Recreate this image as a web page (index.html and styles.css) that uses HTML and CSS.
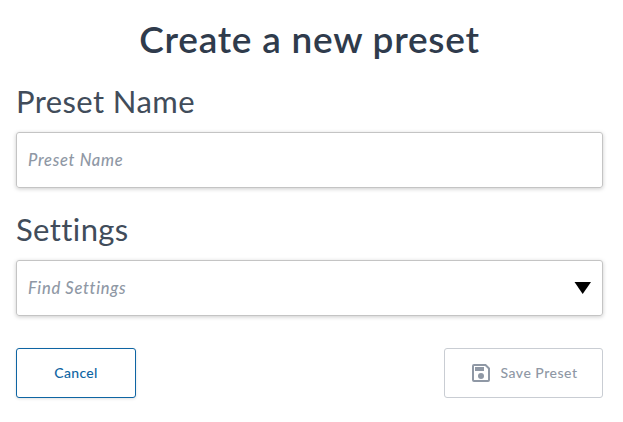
FILE: index.html
```
<!DOCTYPE html>
<html lang="en">
<head>
    <meta charset="UTF-8">
    <meta name="viewport" content="width=device-width, initial-scale=1.0">
    <title>Create a new preset</title>
    <link rel="stylesheet" href="styles.css">
</head>
<body>
    <form class="preset-form">
        <h1 class="title">Create a new preset</h1>

        <label class="label" for="preset-name">Preset Name</label>
        <div class="field">
            <input class="input" id="preset-name" type="text" placeholder="Preset Name">
        </div>

        <label class="label" for="settings">Settings</label>
        <div class="field">
            <input class="input" id="settings" type="text" placeholder="Find Settings">
            <svg class="arrow" width="17" height="12" viewBox="0 0 17 12">
                <path d="M0.5 0h16.5L8.7 12z" fill="#000"/>
            </svg>
        </div>

        <div class="actions">
            <button class="btn btn-cancel" type="button"><span>Cancel</span></button>
            <button class="btn btn-save" type="submit" disabled>
                <svg class="save-icon" width="18" height="18" viewBox="0 0 18 18">
                    <path d="M2 1h11.5L17 4.5V16a1 1 0 0 1-1 1H2a1 1 0 0 1-1-1V2a1 1 0 0 1 1-1z" fill="none" stroke="#8f98a5" stroke-width="2"/>
                    <path d="M3 3h9v4H3z" fill="#8f98a5"/>
                    <circle cx="9" cy="12" r="3" fill="#8f98a5"/>
                </svg>
                <span>Save Preset</span>
            </button>
        </div>
    </form>
</body>
</html>
```
FILE: styles.css
```
* {
    box-sizing: border-box;
}

body {
    font-family: Lato, "Open Sans", sans-serif;
    background-color: #fff;
    margin: 0;
}

.preset-form {
    display: flex;
    flex-direction: column;
    padding: 15px 20px 24px 16px;
}

.title {
    margin: 0 0 18px;
    color: #2f3b4c;
    font-size: 37px;
    font-weight: 600;
    line-height: 48px;
    letter-spacing: 0.75px;
    text-align: center;
    white-space: nowrap;
}

.label {
    margin-bottom: 11px;
    color: #414c5a;
    font-size: 31px;
    line-height: 40px;
    letter-spacing: 0.4px;
}

.field {
    display: flex;
    align-items: center;
    height: 56px;
    margin-bottom: 21px;
    padding: 0 11px;
    border: 1px solid #c4c4c4;
    border-radius: 3px;
    box-shadow: 0 1px 4px rgba(0, 0, 0, 0.2);
}

.input {
    flex: 1;
    min-width: 0;
    padding: 0;
    border: none;
    outline: none;
    background: none;
    font: italic 500 16.5px Lato, "Open Sans", sans-serif;
    letter-spacing: 0.7px;
}

.input::placeholder {
    color: #8f98a5;
    opacity: 1;
}

.arrow {
    flex: none;
}

.actions {
    display: flex;
    justify-content: space-between;
    margin-top: 11px;
}

.btn {
    display: flex;
    align-items: center;
    justify-content: center;
    height: 50px;
    padding: 0;
    border: 1px solid;
    border-radius: 3px;
    background-color: #fff;
    font: 500 14px Lato, "Open Sans", sans-serif;
    letter-spacing: 0.3px;
}

.btn span {
    padding-bottom: 2px;
}

.btn-cancel {
    width: 120px;
    border-color: #0e65a3;
    color: #0e65a3;
    box-shadow: 0 1px 3px rgba(0, 0, 0, 0.12);
}

.btn-save {
    width: 159px;
    gap: 11px;
    padding-left: 2px;
    border-color: #c9cdd3;
    color: #8f98a5;
    letter-spacing: 0.5px;
}
```
